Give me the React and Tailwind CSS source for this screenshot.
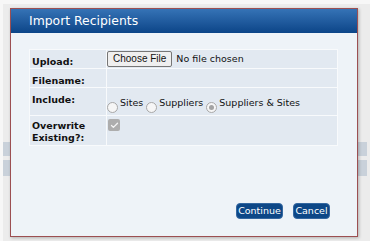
import { Check } from 'lucide-react'

const VERDANA = { fontFamily: 'Verdana, "DejaVu Sans", sans-serif' }

function Row({ label, children, h, pt = 'pt-[6px]' }) {
  return (
    <tr className="bg-[#e2e9f1]">
      <td className={`w-[77px] border border-[#f8fafc] px-[2px] align-top font-bold text-[9.5px] leading-[12px] text-[#111] ${pt}`}>
        {label}
      </td>
      <td className="border border-[#f8fafc] px-0 py-0 align-top text-[9.5px] text-[#111]">
        <div className={h}>{children}</div>
      </td>
    </tr>
  )
}

function Radio({ checked, label }) {
  return (
    <label className="inline-flex items-end mr-[3px]">
      <span className="w-[11px] h-[11px] rounded-full border border-[#a8a8a8] bg-[#f6f6f6] flex items-center justify-center mr-[2px] mb-[-4px]">
        {checked && <span className="w-[5px] h-[5px] rounded-full bg-[#a3a3a3]" />}
      </span>
      <span className="leading-[12px]">{label}</span>
    </label>
  )
}

export default function App() {
  return (
    <div className="relative w-[370px] h-[241px] bg-[#ececec] overflow-hidden" style={VERDANA}>
      {/* background page scraps */}
      <div className="absolute left-0 top-0 w-[370px] h-[4px] bg-[#f7f7f7]" />
      <div className="absolute left-0 top-0 w-[3px] h-[241px] bg-[#f7f7f7]" />
      <div className="absolute left-[3px] top-[142px] w-[364px] h-[14px] bg-[#c9d1da]" />
      <div className="absolute left-[3px] top-[160px] w-[364px] h-[16px] bg-[#c9d1da]" />

      <div className="absolute left-[10px] top-[8px] w-[348px] h-[229px] border border-[#9c4f52] bg-[#eef3f8] shadow-[1px_1px_3px_rgba(0,0,0,0.25)] flex flex-col">
        <div className="h-[24px] bg-gradient-to-b from-[#3573b6] to-[#0b4588] flex items-center pl-[18px] text-white text-[12.4px]">
          Import Recipients
        </div>
        <div className="flex-1 flex flex-col px-[18px] pt-[16px]">
          <table className="w-[309px] border-collapse">
            <tbody>
              <Row label="Upload:" h="h-[18px] flex items-center">
                <span className="h-[16px] px-[5px] border border-[#767676] rounded-[2px] bg-[#efefef] text-[10px] leading-[14px] flex items-center" style={{ fontFamily: '"Liberation Sans", Arial, sans-serif' }}>
                  Choose File
                </span>
                <span className="ml-[4px]">No file chosen</span>
              </Row>
              <Row label="Filename:" h="h-[18px]" />
              <Row label="Include:" h="h-[27px] flex items-end pb-[6px]">
                <Radio label="Sites" />
                <Radio label="Suppliers" />
                <Radio checked label="Suppliers & Sites" />
              </Row>
              <Row label={<>Overwrite<br />Existing?:</>} h="h-[29px] flex items-start pt-[3px]" pt="pt-[4px]">
                <span className="w-[12px] h-[12px] rounded-[2px] bg-[#adadad] flex items-center justify-center ml-[1px]">
                  <Check size={9} strokeWidth={3.5} color="#f4f4f4" />
                </span>
              </Row>
            </tbody>
          </table>
          <div className="flex-1" />
          <div className="flex justify-end gap-[10px] pr-[9px] pb-[17px]">
            <button className="w-[47px] h-[16px] rounded-[4px] bg-[#0d4787] border border-[#3467a0] text-white text-[9.5px] leading-[14px]">Continue</button>
            <button className="w-[37px] h-[16px] rounded-[4px] bg-[#0d4787] border border-[#3467a0] text-white text-[9.5px] leading-[14px]">Cancel</button>
          </div>
        </div>
      </div>
    </div>
  )
}
